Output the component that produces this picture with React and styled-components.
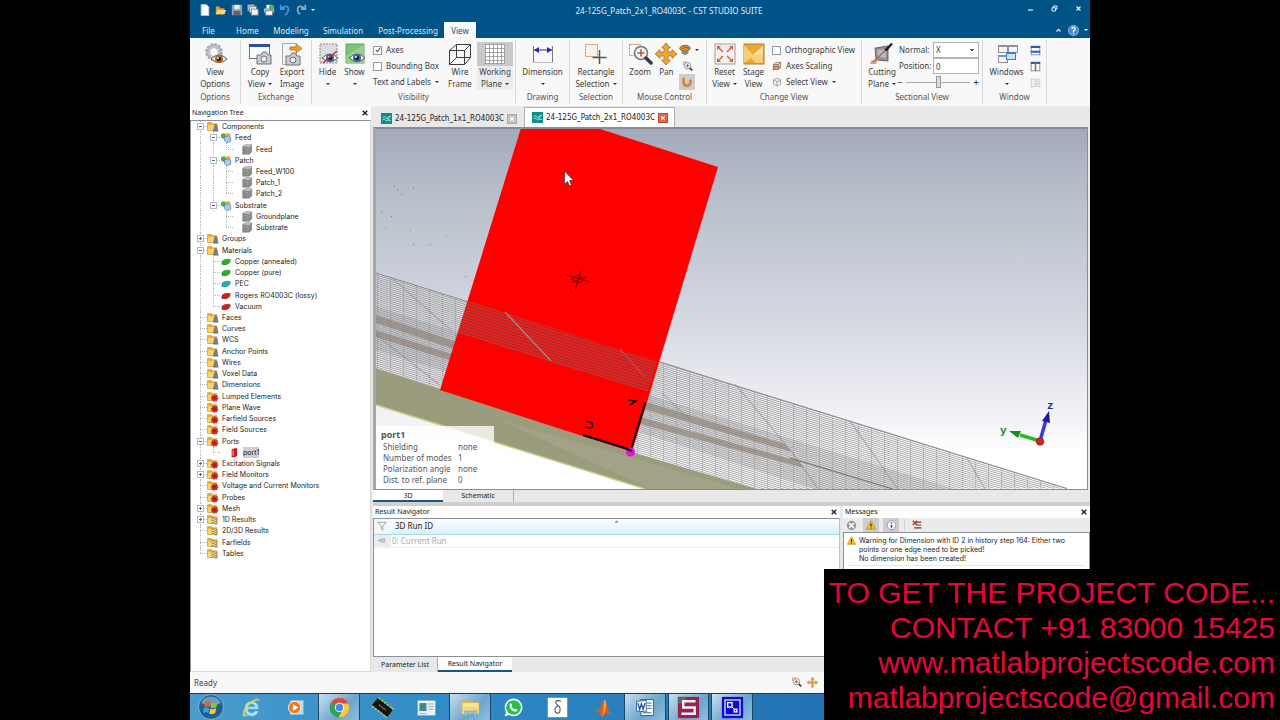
import React from "react";
import styled, { createGlobalStyle } from "styled-components";

const ui = '"Noto Sans", "Open Sans", sans-serif';
const small = 'Inter, "Noto Sans", sans-serif';
const tahoma = '"DejaVu Sans Condensed", "Noto Sans", sans-serif';

const Global = createGlobalStyle`
  * { box-sizing: border-box; }
  body { margin: 0; background: #000; }
  button, select, input { font: inherit; color: inherit; margin: 0; padding: 0; border: 0; background: none; border-radius: 0; }
  h1, h2, p, ul, dl, dd { margin: 0; padding: 0; font-size: inherit; font-weight: inherit; }
  ul { list-style: none; }
`;

const Stage = styled.div`
  position: relative;
  min-height: 100vh;
  background: #000;
`;
const Desktop = styled.div`
  display: flex;
  flex-direction: column;
  width: 125vh;
  max-width: 100%;
  height: 100vh;
  margin: 0 auto;
  background: #e8e8e8;
  color: #222;
  font: 8px/12px ${ui};
`;

/* ---------- title bar ---------- */
const TitleBar = styled.header`
  display: flex;
  align-items: center;
  height: 22px;
  flex: none;
  background: #005386;
  color: #e6eef5;
`;
const QuickBar = styled.div`
  display: flex;
  align-items: center;
  gap: 4px;
  width: 130px;
  padding: 0 0 2px 9px;
`;
const Title = styled.h1`
  flex: 1;
  text-align: center;
`;
const IconButton = styled.button`
  display: grid;
  place-items: center;
  width: ${(p) => p.$w || 12}px;
  height: ${(p) => p.$h || 16}px;
  background: ${(p) => (p.$on ? "#cdcdcd" : "none")};
`;
const WindowButton = styled.button`
  display: grid;
  place-items: center;
  width: 24px;
  height: 16px;
  margin-bottom: 6px;
`;
const Svg = styled.svg`
  display: block;
  flex: none;
  width: ${(p) => p.$w}px;
  height: ${(p) => p.$h || p.$w}px;
`;

/* ---------- ribbon ---------- */
const TabRow = styled.nav`
  display: flex;
  height: 16px;
  flex: none;
  background: #005386;
  color: #dfe9f2;
`;
const RibbonTab = styled.button`
  width: ${(p) => p.$w}px;
  padding-top: 2px;
  line-height: 14px;
  background: ${(p) => (p.$on ? "#f8f8f8" : "none")};
  color: ${(p) => (p.$on ? "#1b4f78" : "inherit")};
`;
const Spacer = styled.div`
  flex: 1;
`;
const Ribbon = styled.div`
  display: flex;
  height: 68px;
  flex: none;
  padding: 2px 0;
  background: #f8f8f8;
  color: #3c3c3c;
`;
const GroupBox = styled.section`
  display: flex;
  flex-direction: column;
  justify-content: space-between;
  width: ${(p) => p.$w}px;
  padding: 2px ${(p) => p.$pad || 0}px 1px;
  border-right: 1px solid #d8d8d8;
`;
const GroupRow = styled.div`
  display: flex;
  justify-content: ${(p) => p.$justify || "center"};
`;
const GroupTitle = styled.h2`
  text-align: center;
  color: #555;
`;
const BigButton = styled.button`
  display: flex;
  flex-direction: column;
  align-items: center;
  width: ${(p) => p.$w}px;
  height: 48px;
  white-space: nowrap;
  background: ${(p) => (p.$on ? "linear-gradient(#c9c9c9 24px, #ececec 24px)" : "none")};
`;
const Line = styled.span`
  display: flex;
  align-items: center;
  gap: 3px;
  height: 12px;
`;
const Caret = styled.i`
  border: 2px solid transparent;
  border-top-color: ${(p) => p.$c || "#333"};
  border-bottom: 0;
`;
const Stack = styled.div`
  display: flex;
  flex-direction: column;
  padding-left: ${(p) => p.$pl || 0}px;
  width: ${(p) => p.$w || 70}px;
`;
const Option = styled.label`
  display: flex;
  align-items: center;
  gap: 4px;
  height: 16px;
  white-space: nowrap;
`;
const OptionButton = styled.button`
  display: flex;
  align-items: center;
  gap: 4px;
  height: 16px;
  white-space: nowrap;
`;
const CheckCell = styled.span`
  display: grid;
  place-items: center;
  > * { grid-area: 1 / 1; }
  > svg { visibility: hidden; pointer-events: none; }
  > input:checked + svg { visibility: visible; }
`;
const CheckInput = styled.input`
  appearance: none;
  width: 9px;
  height: 9px;
  border: 1px solid #9a9a9a;
  background: #fff;
`;
const Field = styled.label`
  display: grid;
  grid-template-columns: 34px 46px;
  align-items: center;
  height: 16px;
`;
const fieldBox = `
  width: 100%;
  height: 16px;
  padding-left: 2px;
  border: 1px solid #b4b4b4;
  background: #fff;
  line-height: 12px;
  appearance: none;
`;
const TextBox = styled.input`${fieldBox}`;
const SelectBox = styled.select`
  ${fieldBox}
  background: linear-gradient(#555, #555) 36px 6px / 4px 1px no-repeat,
    linear-gradient(#555, #555) 37px 7px / 2px 1px no-repeat, #fff;
`;
const SliderRow = styled.div`
  display: flex;
  align-items: center;
  justify-content: space-between;
  height: 16px;
  margin-left: -2px;
`;
const Slider = styled.input`
  appearance: none;
  width: 64px;
  height: 12px;
  background: linear-gradient(#aaa, #aaa) 0 6px / 100% 1px no-repeat;
  &::-webkit-slider-thumb {
    appearance: none;
    width: 5px;
    height: 12px;
    border: 1px solid #999;
    background: #ddd;
  }
`;
const StepButton = styled.button`
  width: 6px;
  height: 12px;
  line-height: 10px;
  font-size: 10px;
`;

/* ---------- workspace ---------- */
const Body = styled.main`
  display: flex;
  flex: 1;
  min-height: 0;
`;
const NavDock = styled.aside`
  display: flex;
  flex-direction: column;
  width: 181px;
  flex: none;
  background: #fff;
`;
const DockHead = styled.div`
  display: flex;
  align-items: center;
  justify-content: space-between;
  height: ${(p) => p.$h || 12}px;
  flex: none;
  padding: 0 1px 0 2px;
  background: #fdfdfd;
  color: #222;
  font: 7px/12px ${ui};
`;
const TreeBox = styled.div`
  flex: 1;
  overflow: hidden;
  padding-left: 3px;
  border: 1px solid #8b9199;
  border-right-color: #d8d8d8;
  border-bottom-color: #d8d8d8;
`;
const TreeList = styled.ul`
  display: grid;
  grid-auto-rows: 1fr;
  height: 438px;
  font: 7px/11px ${small};
  color: #1c1c1c;
`;
const TreeRow = styled.li`
  display: flex;
  align-items: center;
`;
const dotsV = "repeating-linear-gradient(to bottom, #b4b4b4 0 1px, transparent 1px 2px)";
const dotsH = "repeating-linear-gradient(to right, #b4b4b4 0 1px, transparent 1px 2px)";
const guides = {
  "|": `${dotsV} 6px 0 / 1px 100% no-repeat`,
  t: `${dotsV} 6px 0 / 1px 100% no-repeat, ${dotsH} 6px 50% / 7px 1px no-repeat`,
  l: `${dotsV} 6px 0 / 1px 50% no-repeat, ${dotsH} 6px 50% / 7px 1px no-repeat`,
  " ": "none",
};
const Guide = styled.span`
  display: grid;
  place-items: center;
  width: 13px;
  height: 100%;
  background: ${(p) => guides[p.$kind]};
`;
const Toggle = styled.button`
  display: grid;
  place-items: center;
  width: 7px;
  height: 7px;
  border: 1px solid #b4bac4;
  background: ${(p) => (p.$open ? "" : "linear-gradient(#567, #567) 2px 1px / 1px 3px no-repeat,")}
    linear-gradient(#567, #567) 1px 2px / 3px 1px no-repeat, #fff;
`;
const TreeLabel = styled.span`
  display: flex;
  align-items: center;
  gap: 3px;
  padding-left: ${(p) => (p.$deep ? 8 : 0)}px;
  white-space: nowrap;
`;
const Marked = styled.span`
  background: ${(p) => (p.$on ? "#cfcfcf" : "none")};
`;
const Center = styled.div`
  display: flex;
  flex-direction: column;
  flex: 1;
  min-width: 0;
  padding-left: 2px;
`;
const DocTabs = styled.div`
  display: flex;
  align-items: flex-end;
  height: 21px;
  flex: none;
  background: #e8e8e8;
  font: 8px/12px ${tahoma};
`;
const DocTab = styled.div`
  display: flex;
  align-items: center;
  gap: 3px;
  width: 151px;
  height: ${(p) => (p.$on ? 20 : 18)}px;
  padding-left: 7px;
  border: solid ${(p) => (p.$on ? "#b0b0b0" : "transparent")};
  border-width: 1px 1px 0;
  background: ${(p) => (p.$on ? "#fff" : "none")};
`;
const TabClose = styled.button`
  display: grid;
  place-items: center;
  width: 10px;
  height: 10px;
  border: 1px solid ${(p) => (p.$hot ? "#c0492c" : "#aaa")};
  background: ${(p) => (p.$hot ? "#e06a4c" : "#c4c4c4")};
`;
const Viewport = styled.div`
  position: relative;
  flex: 1;
  min-height: 0;
  margin-right: 2px;
  border: solid #878c96;
  border-width: 2px 1px 1px 3px;
  border-left-color: #a6a8ac;
  background: linear-gradient(#a2a9b9 0%, #b4bbc8 14%, #bfc6ce 28%, #cccfda 42%, #d8dae2 55%, #e4e5ec 66%, #f0f0f5 78%, #ffffff 90%);
`;
const Scene = styled.svg`
  display: block;
  width: 100%;
  height: 100%;
`;
const InfoCard = styled.div`
  position: absolute;
  left: 0;
  bottom: 0;
  width: 118px;
  height: 63px;
  padding: 2px 0 0 5px;
  background: rgba(255, 255, 255, 0.78);
  color: #555;
`;
const InfoTitle = styled.h2`
  font-weight: 700;
  font-size: 9px;
  line-height: 13px;
`;
const InfoList = styled.dl`
  display: grid;
  grid-template-columns: 75px 1fr;
  padding-left: 2px;
  line-height: 11px;
`;
const ViewTabs = styled.div`
  display: flex;
  height: 16px;
  flex: none;
  border-bottom: 4px solid #cfcfcf;
  font: 7px/12px ${ui};
`;
const LowerTabs = styled.div`
  display: flex;
  height: 15px;
  flex: none;
  font: 7px/12px ${ui};
`;
const FlatTab = styled.button`
  width: ${(p) => p.$w}px;
  border-bottom: ${(p) => (p.$on ? "2px solid #1c567f" : "0")};
  border-right: ${(p) => (p.$on ? "0" : "1px solid #b0b0b0")};
  background: ${(p) => (p.$on ? "#fff" : "none")};
`;
const Lower = styled.div`
  display: flex;
  gap: 3px;
  height: 166px;
  flex: none;
`;
const Results = styled.section`
  display: flex;
  flex-direction: column;
  flex: 1;
`;
const ResultBox = styled.div`
  flex: 1;
  border: 1px solid #8b9199;
  border-right-color: #c0c0c0;
  background: #fff;
`;
const RunTable = styled.table`
  width: 100%;
  border-collapse: collapse;
  font: 8px/12px ${ui};
  text-align: left;
  th { padding: 0 0 0 4px; height: 15px; font-weight: 400; background: linear-gradient(#fdfeff, #d9f0fa); border-bottom: 1px solid #a6d9ec; }
  th:first-child { width: 17px; background: #f4f7f9; }
  td { padding: 0 0 0 1px; height: 12px; color: #a8a8a8; border-bottom: 1px solid #f2f2f2; }
  td:first-child, th:first-child { padding: 0 0 0 3px; }
  td:first-child { background: #ececec; }
`;
const HeadCell = styled.span`
  display: grid;
  grid-template-columns: 1fr 9px 1fr;
  align-items: start;
`;
const Messages = styled.section`
  display: flex;
  flex-direction: column;
  width: 247px;
  background: #fff;
`;
const MsgTools = styled.div`
  display: flex;
  align-items: center;
  gap: 4px;
  height: 14px;
  background: #ebebeb;
`;
const ToolDivider = styled.span`
  width: 2px;
  height: 12px;
  border-right: 1px solid #d0d0d0;
`;
const MsgBox = styled.div`
  flex: 1;
  padding: 3px 4px 0 3px;
  border: 1px solid #8b9199;
`;
const Msg = styled.div`
  display: grid;
  grid-template-columns: 12px 1fr;
  padding-bottom: 2px;
  margin-bottom: 3px;
  border-bottom: 1px solid #e6e6e6;
  font: 7px/9px ${small};
`;
const StatusBar = styled.footer`
  display: flex;
  align-items: center;
  gap: 4px;
  height: 21px;
  flex: none;
  padding: 0 272px 0 4px;
  background: #f8f8f8;
  color: #444;
`;
const TaskBar = styled.footer`
  display: flex;
  height: 27px;
  flex: none;
  border-top: 1px solid #173e5c;
  background: linear-gradient(90deg, #4a9ccb, #2f8ac4 30%, #2273b5 70%, #1f6cb0);
`;
const StartButton = styled.button`
  display: grid;
  place-items: center;
  width: 41px;
`;
const Tasks = styled.div`
  display: grid;
  grid-template-columns: repeat(12, 1fr);
  gap: 2px;
  width: 522px;
`;
const Task = styled.button`
  display: grid;
  place-items: center;
  border: solid ${(p) => (p.$on ? "#1b4766" : "transparent")};
  border-width: 0 1px;
  background: ${(p) => (p.$on ? "linear-gradient(135deg, #c9dfee, #6ba6ce 60%, #8fbedd)" : "none")};
`;
const Caption = styled.address`
  position: absolute;
  right: 0;
  bottom: 0;
  width: 456px;
  height: 151px;
  padding: 6px 5px 0 0;
  background: #000;
  color: #e6063f;
  font: normal 30px/35px "Liberation Sans", Arial, sans-serif;
  text-align: right;
  white-space: nowrap;
`;
const CaptionLink = styled.a`
  display: block;
  color: inherit;
  text-decoration: none;
`;

/* ---------- icons ---------- */
const Eye = ({ x, y, c = "#3b64a8" }) => (
  <g transform={`translate(${x} ${y})`}>
    <path d="M-8 0Q0-8 8 0Q0 7-8 0Z" fill="#f4f2ec" stroke="#5c5650" strokeWidth="1" />
    <circle r="4" fill={c} />
    <circle r="2" fill="#111" />
    <circle cx="-1" cy="-1" r="1" fill="#fff" />
  </g>
);
const Camera = ({ x, y }) => (
  <g transform={`translate(${x} ${y})`}>
    <path d="M0 3H4L6 0H9L11 3H14V12H0Z" fill="#c9ccd0" stroke="#6d7278" />
    <circle cx="7" cy="7" r="3" fill="#e9edf0" stroke="#6d7278" />
  </g>
);
const big = {
  viewOptions: (
    <>
      <circle cx="12" cy="10" r="7.5" fill="none" stroke="#a0a5aa" strokeWidth="2.5" strokeDasharray="2.6 1.330" />
      <circle cx="12" cy="10" r="5.500" fill="none" stroke="#bfc3c7" strokeWidth="3.500" />
      <circle cx="12" cy="10" r="7" fill="none" stroke="#9a9fa4" strokeWidth=".6" />
      <Eye x="17" y="17" c="#b06a28" />
    </>
  ),
  copyView: (
    <>
      <rect x="2.5" y="2.5" width="20" height="14" fill="#fdfdfd" stroke="#6c7a90" />
      <rect x="2" y="2" width="21" height="3" fill="#2b4da3" />
      <Camera x="10" y="10" />
    </>
  ),
  exportImage: (
    <>
      <path d="M3.500 1.500H17.500V22.500H3.500Z" fill="#f4f4f4" stroke="#a5a8ad" />
      <path d="M11 5H17V2L23 6.500L17 11V8H11Z" fill="#f29a2e" stroke="#a8651a" strokeWidth=".7" />
      <Camera x="7" y="11" />
    </>
  ),
  hide: (
    <>
      <rect x="5" y="2" width="17" height="19" fill="#dedede" stroke="#888" strokeDasharray="2 1" />
      <Eye x="15" y="16" />
      <path d="M8 21L22 9" stroke="#d4262a" strokeWidth="1.600" />
    </>
  ),
  show: (
    <>
      <rect x="4" y="2" width="18" height="19" fill="#7cc576" stroke="#63a860" />
      <path d="M4 14L22 3V21H4Z" fill="#a5dba0" opacity=".6" />
      <Eye x="15" y="16" />
    </>
  ),
  wire: <path d="M2.500 8.500H17.500V22.500H2.500ZM9.500 2.500H23.500V15.500H9.500ZM2.500 8.500L9.500 2.500M17.500 8.500L23.500 2.500M17.500 22.500L23.500 15.500M2.500 22.500L9.500 15.500" fill="none" stroke="#3d3d3d" />,
  grid: (
    <>
      <rect x="3" y="2" width="20" height="20" fill="#fff" />
      <path d="M3.500 2V22M7.500 2V22M11.500 2V22M15.500 2V22M19.500 2V22M22.500 2V22M3 2.500H23M3 6.500H23M3 10.500H23M3 14.500H23M3 18.500H23M3 21.500H23" stroke="#8f8f8f" strokeWidth=".8" />
    </>
  ),
  dimension: (
    <>
      <path d="M3.500 4V20M22.500 4V20" stroke="#777" />
      <path d="M3 20.500H23" stroke="#bbb" />
      <path d="M4 8H22" stroke="#2929b8" />
      <path d="M4 8L9 5V11ZM22 8L17 5V11Z" fill="#2929b8" />
    </>
  ),
  select: (
    <>
      <rect x="2.500" y="2.500" width="12" height="12" fill="#fbf3e8" stroke="#d08a45" strokeDasharray="2 1" />
      <path d="M16.500 8V22M9.500 15.500H23.500" stroke="#555" strokeWidth="1.500" />
    </>
  ),
  zoom: (
    <>
      <rect x="2.500" y="2.500" width="11" height="11" fill="none" stroke="#d08a45" strokeDasharray="2 1" />
      <circle cx="14" cy="11" r="6.500" fill="#eef4f8" stroke="#777" strokeWidth="1.500" />
      <path d="M14 7.500V14.500M10.500 11H17.500" stroke="#c05a2a" strokeWidth="1.600" />
      <path d="M19 16L24 21" stroke="#3a3a3a" strokeWidth="3.500" strokeLinecap="round" />
    </>
  ),
  pan: <path d="M13 1L17.500 6H15V10H19V7.500L24 12L19 16.500V14H15V18H17.500L13 23L8.500 18H11V14H7V16.500L2 12L7 7.500V10H11V6H8.500Z" fill="#f0a437" stroke="#b0721c" strokeWidth=".8" />,
  reset: (
    <>
      <rect x="3" y="2" width="20" height="20" fill="#f3f1ee" stroke="#9d9d9d" />
      <path d="M11 10L7 6M15 10L19 6M11 14L7 18M15 14L19 18" stroke="#cc5a3a" strokeWidth="1.300" />
      <path d="M5 4H9L5 8ZM21 4H17L21 8ZM5 20H9L5 16ZM21 20H17L21 16Z" fill="#cc5a3a" />
    </>
  ),
  stage: (
    <>
      <rect x="3" y="2" width="20" height="20" fill="#eda92f" stroke="#a9803c" />
      <path d="M3 3L12 13L22 4V21H15L10 16L3 21Z" fill="#f7cf74" />
      <path d="M12 13L22 4L21 12Z" fill="#fbe4a8" />
    </>
  ),
  cutting: (
    <>
      <path d="M6 6L19 4V19L7 18Z" fill="#8d9196" stroke="#555" strokeWidth=".8" />
      <path d="M8 8L17 7V16L9 15Z" fill="#b7bcc0" />
      <path d="M2 19L9 17L7 22H1Z" fill="#d9a183" />
      <path d="M4 20L19 6" stroke="#c2632e" strokeWidth="1.300" />
      <path d="M15 8L22 1L24 2L18 9Z" fill="#222" />
    </>
  ),
  windows: (
    <>
      {[[4, 3], [14, 3], [4, 13], [12, 10]].map(([x, y], i) => (
        <g key={i}>
          <rect x={x + 0.5} y={y + 0.5} width="9" height="7" fill={i === 3 ? "#cfe2f8" : "#f4f4f4"} stroke={i === 3 ? "#3f7fc8" : "#8d9298"} />
          <rect x={x} y={y} width="10" height="2" fill={i === 3 ? "#3f7fc8" : "#8d9298"} />
        </g>
      ))}
    </>
  ),
};
const Big = ({ name }) => (
  <Svg $w={26} $h={24} viewBox="0 0 26 24" aria-hidden="true">{big[name]}</Svg>
);

const tiny = {
  page: <path d="M2.500 .5H8.500L11.500 3.500V13.500H2.500Z" fill="#fff" stroke="#b9c4cd" />,
  open: (
    <>
      <path d="M1 3H5L6 5H11V12H1Z" fill="#d9a132" />
      <path d="M3 7H13L11 12H1Z" fill="#ffd873" />
    </>
  ),
  save: (
    <>
      <rect x="1" y="1" width="12" height="12" fill="#9aa2ab" />
      <rect x="4" y="1" width="6" height="5" fill="#e8ecef" />
      <rect x="3" y="8" width="8" height="5" fill="#5d656e" />
    </>
  ),
  copies: (
    <>
      <rect x="1" y="1" width="8" height="7" fill="#c9d1d8" stroke="#7a868f" />
      <rect x="3" y="3" width="8" height="7" fill="#dde3e8" stroke="#7a868f" />
      <rect x="5" y="6" width="8" height="7" fill="#f1f4f6" stroke="#7a868f" />
    </>
  ),
  print: (
    <>
      <rect x="4" y="1" width="7" height="5" fill="#fff" />
      <rect x="1" y="5" width="12" height="5" rx="1" fill="#a9b3ba" />
      <rect x="3" y="8" width="8" height="5" fill="#fff" stroke="#75808a" />
      <circle cx="10" cy="4" r="3" fill="#4fb34c" />
    </>
  ),
  undo: <path d="M3 5Q10 0 11 6Q11 10 7 13M2 1V6H7" fill="none" stroke="#4c8fdc" strokeWidth="2" />,
  redo: <path d="M11 5Q4 0 3 6Q3 10 6 12M12 1V6H7" fill="none" stroke="#90a8bc" strokeWidth="2" />,
  rotate: (
    <>
      <ellipse cx="7" cy="5" rx="6" ry="3.500" fill="#d98f3a" stroke="#77522a" />
      <path d="M4 5Q7 3 12 5" fill="none" stroke="#77522a" />
      <path d="M3 8H11V11L7 13L3 11Z" fill="#888" />
    </>
  ),
  zoomMini: (
    <>
      <path d="M2 5V1H6" fill="none" stroke="#d08a45" />
      <circle cx="7" cy="6" r="4" fill="#f3f6f8" stroke="#777" />
      <path d="M7 4V8M5 6H9" stroke="#c4552a" strokeWidth="1.400" />
      <path d="M10 9L13 12" stroke="#333" strokeWidth="2" />
    </>
  ),
  orbit: <path d="M3 2V7Q3 11.500 7 11.500T11 7V4" fill="none" stroke="#d48635" strokeWidth="3" />,
  scaling: (
    <>
      <path d="M2 5H9V12H2ZM5 2H12V9H9M2 5L5 2M9 5L12 2M9 12L12 9M4 5V12M7 5V12M2 8H9" fill="#f3ddc4" stroke="#8a5b37" />
      <path d="M1 13L5 9" stroke="#d9772d" strokeWidth="2" />
    </>
  ),
  box: <path d="M2 4L7 1.500L12 4V10L7 13L2 10ZM2 4L7 6.500L12 4M7 6.500V13" fill="#eee" stroke="#888" />,
  splitH: (
    <>
      <rect x="1.500" y="1.500" width="11" height="11" fill="#fff" stroke="#5f7fae" />
      <path d="M1 2.500H13M1 8.500H13" stroke="#2d5c9c" strokeWidth="2.500" />
    </>
  ),
  splitV: (
    <>
      <rect x="1.500" y="1.500" width="11" height="11" fill="#fff" stroke="#6b7784" />
      <path d="M1 2.500H13" stroke="#2d5c9c" strokeWidth="2.500" />
      <path d="M7 1V13" stroke="#6b7784" strokeWidth="2" />
    </>
  ),
  splitG: <path d="M1.500 2.500H6.500V12.500H1.500ZM8.500 2.500H12.500V6.500H8.500ZM8.500 8.500H12.500V12.500H8.500Z" fill="#f2f2f2" stroke="#c0c0c0" />,
  cst: (
    <>
      <rect width="14" height="14" fill="#0d8e87" />
      <path d="M2 6Q4 3 6 6T9 5M2 9Q4 6 6 9T9 8M12.500 4.500H10V9.500H12.500" fill="none" stroke="#d6f3ee" />
    </>
  ),
  tick: <path d="M3 7L6 10L11 3" fill="none" stroke="#444" strokeWidth="1.800" />,
  x: <path d="M3 3L11 11M11 3L3 11" stroke="currentColor" strokeWidth="2.400" />,
  min: <path d="M2 10H12" stroke="currentColor" strokeWidth="2.400" />,
  restore: <path d="M5 5V2H12V8H9M2 5.500H9V12H2Z" fill="none" stroke="currentColor" strokeWidth="2" />,
  up: <path d="M3 9L7 5L11 9" fill="none" stroke="currentColor" strokeWidth="2.500" />,
  warn: (
    <>
      <path d="M7 1L13.500 13H.5Z" fill="#f6c024" stroke="#c08a10" />
      <path d="M7 5V9M7 10.500V12" stroke="#222" strokeWidth="1.600" />
    </>
  ),
  err: (
    <>
      <circle cx="7" cy="7" r="6" fill="#999" />
      <path d="M4 4L10 10M10 4L4 10" stroke="#fff" strokeWidth="2" />
    </>
  ),
  info: (
    <>
      <circle cx="7" cy="6.500" r="5.500" fill="#fff" stroke="#7d8ba6" />
      <path d="M7 3V4.500M7 6V10" stroke="#23479b" strokeWidth="2" />
      <path d="M5 12L7 14L8 12Z" fill="#7d8ba6" />
    </>
  ),
  clear: (
    <>
      <path d="M5 3H13M5 7H13M3 11H13" stroke="#444" strokeWidth="1.600" />
      <path d="M1 1L7 7M7 1L1 7" stroke="#cc2a2a" strokeWidth="1.800" />
    </>
  ),
  filter: <path d="M1 2H13L8 7V13L6 11V7Z" fill="#f4f4f4" stroke="#888" />,
  pin: <path d="M1 7H5M5 5V9H9L12 10V4L9 5H5" fill="#ccc" stroke="#999" />,
  sortUp: <path d="M3 5L7 1L11 5Z" fill="#5d7f92" />,
  panMini: <path d="M7 0L9 3H8V6H11V4.500L14 7L11 9.500V8H8V11H9L7 14L5 11H6V8H3V9.500L0 7L3 4.500V6H6V3H5Z" fill="#e3a13d" stroke="#b47520" strokeWidth=".4" />,
};
const Tiny = ({ name, s = 10 }) => (
  <Svg $w={s} viewBox="0 0 14 14" aria-hidden="true">{tiny[name]}</Svg>
);
const Check = (props) => (
  <CheckCell>
    <CheckInput type="checkbox" {...props} />
    <Tiny name="tick" s={8} />
  </CheckCell>
);

const badge = {
  cone: <path d="M9 6Q10.500 3 12 6L13.500 13H7.500Z" fill="#7d828a" stroke="#4e535a" strokeWidth=".6" />,
  gear: (
    <>
      <circle cx="9" cy="9" r="3.500" fill="#c8281c" stroke="#c8281c" strokeWidth="2.500" strokeDasharray="1.600 1" />
      <circle cx="9" cy="9" r="1.300" fill="#8e1a12" />
    </>
  ),
  plot: <path d="M5 6Q7 3 9 6T13 5.500M5 9Q7 6 9 9T13 8.500M5 12Q7 9 9 12T13 11.500" fill="none" stroke="#7b7f88" strokeWidth="1.200" />,
};
const NodeIcon = ({ kind }) => {
  const mats = { green: "#2cae2c", cyan: "#20adb8", red: "#cf2028" };
  let art;
  if (badge[kind])
    art = (
      <>
        <path d="M0 2H5L6 3.500H12V12H0Z" fill="#e9ae34" stroke="#b37f1c" strokeWidth=".6" />
        <path d="M0.500 5H11V11.500H.5Z" fill="#fad36c" />
        {badge[kind]}
      </>
    );
  else if (mats[kind])
    art = <path d="M1.500 9Q1 6 5 4.500Q10 3 12.500 4.500V7Q12 9.500 8 11Q3 12 1.500 10.500Z" fill={mats[kind]} stroke="#00000055" strokeWidth=".6" />;
  else if (kind === "parts")
    art = (
      <>
        <circle cx="4" cy="5" r="3.500" fill="#4db04a" />
        <circle cx="9.500" cy="4.500" r="3.300" fill="#edb23a" />
        <path d="M5 6L10 5L13 7V12L8 13.500L5 11Z" fill="#a9cbf0" stroke="#3d6fb0" strokeWidth=".8" />
      </>
    );
  else if (kind === "solid")
    art = (
      <>
        <path d="M1.500 3L5 1H13V10L10 13H1.500Z" fill="#8a8a8a" stroke="#707070" strokeWidth=".6" />
        <path d="M1.500 3L5 1H13L10 4Z" fill="#bdbdbd" />
        <path d="M4 6H8V11" fill="none" stroke="#a5a5a5" />
      </>
    );
  else
    art = (
      <>
        <path d="M4 3L8 1.500H11V11L8 13H4Z" fill="#cf1820" />
        <path d="M5 4H7V11H5Z" fill="#f5767a" />
      </>
    );
  return <Svg $w={12} $h={11} viewBox="0 0 14 14" aria-hidden="true">{art}</Svg>;
};

/* guide codes: | line, t branch, l last branch, - open node, + closed node */
const nodes = [
  ["-", "cone", "Components"], ["|-", "parts", "Feed"], ["||l", "solid", "Feed"],
  ["|-", "parts", "Patch"], ["||t", "solid", "Feed_W100"], ["||t", "solid", "Patch_1"], ["||l", "solid", "Patch_2"],
  ["|-", "parts", "Substrate"], ["| t", "solid", "Groundplane"], ["| l", "solid", "Substrate"],
  ["+", "cone", "Groups"], ["-", "cone", "Materials"],
  ["|t", "green", "Copper (annealed)"], ["|t", "green", "Copper (pure)"], ["|t", "cyan", "PEC"],
  ["|t", "red", "Rogers RO4003C (lossy)"], ["|l", "red", "Vacuum"],
  ["t", "cone", "Faces"], ["t", "cone", "Curves"], ["t", "cone", "WCS"], ["t", "cone", "Anchor Points"],
  ["t", "cone", "Wires"], ["t", "cone", "Voxel Data"], ["t", "cone", "Dimensions"],
  ["t", "gear", "Lumped Elements"], ["t", "gear", "Plane Wave"], ["t", "gear", "Farfield Sources"], ["t", "gear", "Field Sources"],
  ["-", "gear", "Ports"], ["|l", "port", "port1"],
  ["+", "gear", "Excitation Signals"], ["+", "gear", "Field Monitors"], ["t", "gear", "Voltage and Current Monitors"],
  ["t", "gear", "Probes"], ["+", "gear", "Mesh"],
  ["+", "plot", "1D Results"], ["t", "plot", "2D/3D Results"], ["t", "plot", "Farfields"], ["l", "plot", "Tables"],
];

const Tree = () => (
  <TreeList>
    {nodes.map(([code, icon, text], i) => (
      <TreeRow key={i}>
        {[...code].map((c, j) =>
          c === "-" || c === "+" ? (
            <Guide key={j} $kind="t"><Toggle $open={c === "-"} aria-label={`Toggle ${text}`} /></Guide>
          ) : (
            <Guide key={j} $kind={c} />
          )
        )}
        <TreeLabel $deep={icon === "solid" || icon === "port"}>
          <NodeIcon kind={icon} />
          <Marked $on={icon === "port"}>{text}</Marked>
        </TreeLabel>
      </TreeRow>
    ))}
  </TreeList>
);

const Group = ({ w, title, pad, justify, children }) => (
  <GroupBox $w={w} $pad={pad}>
    <GroupRow $justify={justify}>{children}</GroupRow>
    <GroupTitle>{title}</GroupTitle>
  </GroupBox>
);
const Tool = ({ w, icon, a, b, drop, on }) => (
  <BigButton $w={w} $on={on}>
    <Big name={icon} />
    <Line>{a}</Line>
    <Line>{b}{drop && <Caret />}</Line>
  </BigButton>
);

const specks = [[394, 186], [397, 190], [401, 194], [413, 188], [381, 211], [391, 216], [385, 228], [410, 230], [446, 236], [413, 244], [430, 244], [465, 276]];

const SceneArt = () => (
  <Scene viewBox="376 129 711 360" preserveAspectRatio="xMinYMin slice" role="img" aria-label="3D model of the patch antenna">
    <defs>
      <pattern id="mesh" width="13" height="2" patternUnits="userSpaceOnUse" patternTransform="skewY(17.2)">
        <rect width="13" height="2" fill="#ffffff" opacity=".3" />
        <path d="M0 .5H13" stroke="#777" strokeWidth=".6" />
        <path d="M.5 0V2" stroke="#888" strokeWidth=".4" />
      </pattern>
      <pattern id="meshRed" width="4" height="3" patternUnits="userSpaceOnUse" patternTransform="skewY(17.2)">
        <path d="M0 1H4" stroke="#8a5a56" strokeWidth="1.200" />
      </pattern>
    </defs>
    <path d="M376 368L440 389L632 452L757 489H645L376 405Z" fill="#9b9c7e" />
    <path d="M376 405L645 489" stroke="#c9cf8c" strokeWidth="1.500" />
    <path d="M500 420L640 460L740 489H650" fill="#a5a78c" opacity=".6" />
    <path d="M376 273L740 387L1067 488.500L757 489L632 452L376 368Z" fill="url(#mesh)" />
    <path d="M376 306L645 394L740 423L955 489H815L645 434L376 350Z" fill="#8e8e92" opacity=".28" />
    <path d="M376 315L460 343V351L376 323ZM376 330L455 355V362L376 337ZM640 400L785 444L791 452L640 408ZM640 417L798 461L804 468L640 424Z" fill="#8d8177" opacity=".65" />
    <path d="M376 273L740 387L1067 488.500" fill="none" stroke="#777" strokeWidth=".8" />
    <path d="M393 279L452 331M735 384L792 452L818 489M850 421L898 489M967 458L985 489M662 393L690 420M376 335L440 385" fill="none" stroke="#808088" strokeWidth=".8" opacity=".8" />
    <path d="M790 458L893 489" stroke="#777" strokeWidth="1.300" />
    {specks.map(([x, y]) => <rect key={`${x}-${y}`} x={x} y={y} width="1" height="1" fill="#7d838e" />)}
    <path d="M521 128H597L718 167L632 452L440 390Z" fill="#ff0000" />
    <path d="M467.500 301L657 361L647.500 392L457.500 333Z" fill="url(#meshRed)" />
    <path d="M505 312L551 361" stroke="#9d8580" strokeWidth="1.500" />
    <path d="M620 349L645 377" stroke="#a07068" strokeWidth=".8" />
    <path d="M566 275L590 282M582 268L575 290M572 278L577 284L584 280L578 275ZM572 282L586 277" fill="none" stroke="#5c0000" strokeWidth=".8" />
    <path d="M583 435L631 450L645 403" fill="none" stroke="#000" strokeWidth="2" />
    <path d="M586 421L592 423Q594 428 590 428L585 427" fill="none" stroke="#200" strokeWidth="1.600" />
    <path d="M628 400L636 401L630 405" fill="none" stroke="#200" strokeWidth="1.600" />
    <circle cx="630.500" cy="452" r="4.500" fill="#e413d2" />
    <path d="M627 449L632 451" stroke="#000" strokeWidth="2" />
    <path d="M1040 441L1020 435" stroke="#2fb52f" strokeWidth="3.500" />
    <path d="M1009 431L1021 431L1018 438Z" fill="#17901a" />
    <path d="M1040 441L1046 420" stroke="#3a3ad6" strokeWidth="3.500" />
    <path d="M1049 411L1050 423L1042 421Z" fill="#1d1d9c" />
    <circle cx="1040" cy="441.500" r="3.800" fill="#d81e1e" stroke="#8c1212" strokeWidth=".6" />
    <text x="1000" y="434" fontFamily="Liberation Mono, monospace" fontWeight="700" fontSize="11" fill="#1a8a1a">y</text>
    <text x="1047" y="409" fontFamily="Liberation Mono, monospace" fontWeight="700" fontSize="11" fill="#2424a8">z</text>
    <path d="M564.500 171V184L567.500 181.500L569.500 186L571.500 185L569.500 180.500H573.500Z" fill="#fff" stroke="#222" strokeWidth=".6" />
  </Scene>
);

const taskArt = {
  IE: (
    <>
      <path d="M21 15H9Q9 19 13 19Q16 19 17 17H21Q19 23 13 23Q5 22 5 14Q6 6 13 6Q21 6 21 15ZM9 12H17Q16 9 13 9T9 12" fill="#a9e2f8" stroke="#3f9cc9" strokeWidth=".5" />
      <path d="M3 22Q3 12 14 5Q22 1 22 6Q20 3 13 8Q5 14 5 21Q8 22 11 21Q3 25 3 22Z" fill="#f3cf46" />
    </>
  ),
  Media: (
    <>
      <rect x="7" y="5" width="15" height="16" fill="#b7dbef" />
      <circle cx="12" cy="13" r="7" fill="#ee7a1e" stroke="#fff" />
      <path d="M10 9L16 13L10 17Z" fill="#fff" />
    </>
  ),
  Chrome: (
    <>
      <circle cx="13" cy="13" r="11" fill="#dd4a3c" />
      <path d="M13 13L3.500 7.500A11 11 0 0 0 12 24L17 15Z" fill="#2aa557" />
      <path d="M13 8.500H23A11 11 0 0 1 12 24L17 15Z" fill="#fbcb39" />
      <circle cx="13" cy="13" r="5.300" fill="#fff" />
      <circle cx="13" cy="13" r="4.200" fill="#4787ef" />
    </>
  ),
  Chip: (
    <g transform="rotate(38 13 13)">
      <path d="M4 6V20M8 6V20M12 6V20M16 6V20M20 6V20M23 6V20" stroke="#c9d24c" strokeWidth="1.800" />
      <rect x="2" y="8" width="22" height="10" fill="#141410" />
      <path d="M8 13H18" stroke="#888" strokeWidth="1.500" strokeDasharray="2 1" />
    </g>
  ),
  News: (
    <>
      <rect x="3" y="5" width="20" height="17" fill="#e9f2f6" stroke="#8aa" strokeWidth=".7" />
      <rect x="5" y="8" width="8" height="9" fill="#3f8a86" />
      <path d="M15 9H21M15 12H21M15 15H21M5 20H13" stroke="#8ca2ab" />
    </>
  ),
  Explorer: (
    <>
      <path d="M3 5H11L12 7H23V21H3Z" fill="#e3b44a" />
      <rect x="4" y="8" width="18" height="12" fill="#fbe59a" />
      <path d="M4 14Q13 10 22 14V19H4Z" fill="#f6d574" />
      <path d="M6 23V17H20V23H17V20H9V23Z" fill="#8cc8ea" stroke="#4d93bd" strokeWidth=".5" />
    </>
  ),
  WhatsApp: (
    <>
      <path d="M3 23L4.500 18A10 10 0 1 1 8 21.500Z" fill="#fff" />
      <circle cx="13" cy="13" r="8.300" fill="#29bd4b" />
      <path d="M9 9Q10 7.500 11 9L11.500 11L10.800 12Q12 14.500 14.500 15.300L15.500 14.500L17.500 15.500Q17.500 17.500 15 17.800Q9 16.500 8.500 11Z" fill="#fff" />
    </>
  ),
  Delta: (
    <>
      <rect x="2" y="2" width="22" height="22" fill="#fff" />
      <path d="M17 6Q12 4 11 7Q11 9 14 11Q17 14 15.500 18Q13 21 10.500 18Q9 13 13.500 11" fill="none" stroke="#555" strokeWidth="1.200" />
    </>
  ),
  Matlab: (
    <>
      <path d="M2 15L9 12L12 15L8 19Z" fill="#3f86ad" />
      <path d="M8 19Q12 15 14 8Q16 1 18 8Q20 16 24 21Q18 17 14 24Q12 18 8 19Z" fill="#df5c1c" />
      <path d="M16 4Q18 4 18.500 10Q18 17 14 24Q16 12 16 4Z" fill="#f5a53a" />
    </>
  ),
  Word: (
    <>
      <rect x="9" y="4" width="14" height="18" fill="#fff" stroke="#2b5797" />
      <path d="M16 8H21M16 11H21M11 19H21M16 14H21" stroke="#2b5797" />
      <path d="M4 6L15 5V18L4 17Z" fill="#fff" stroke="#2b5797" />
      <path d="M5.500 8L7.500 15L9.500 9L11.500 15L13.500 8" fill="none" stroke="#2b5797" strokeWidth="1.600" />
    </>
  ),
  Suite: (
    <>
      <rect x="1" y="1" width="24" height="24" fill="#96224e" />
      <path d="M1 1H10V9H1Z" fill="#5a6a5e" />
      <path d="M21 6H7V13H20V20H5" fill="none" stroke="#f6eef2" strokeWidth="2.800" />
    </>
  ),
  Pixel: (
    <>
      <rect x="1" y="1" width="24" height="24" fill="#0b0bd2" />
      <rect x="4.500" y="4.500" width="17" height="17" fill="none" stroke="#fff" strokeWidth="1.300" />
      <rect x="7.500" y="7.500" width="5" height="5" fill="none" stroke="#fff" strokeWidth="1.500" />
      <rect x="15" y="15" width="3" height="3" fill="none" stroke="#fff" strokeWidth="1.500" />
      <path d="M12 12L15 15" stroke="#fff" />
    </>
  ),
};
const tasks = [["IE"], ["Media"], ["Chrome", 1], ["Chip"], ["News"], ["Explorer", 1], ["WhatsApp"], ["Delta"], ["Matlab"], ["Word", 1], ["Suite", 1], ["Pixel", 1]];

export default function App() {
  return (
    <Stage>
      <Global />
      <Desktop>
        <TitleBar>
          <QuickBar>
            {["page", "open", "save", "copies", "print", "undo", "redo"].map((n) => (
              <IconButton key={n} aria-label={n}><Tiny name={n} s={12} /></IconButton>
            ))}
            <Caret $c="#fff" />
          </QuickBar>
          <Title>24-125G_Patch_2x1_RO4003C - CST STUDIO SUITE</Title>
          <WindowButton aria-label="Minimize"><Tiny name="min" s={7} /></WindowButton>
          <WindowButton aria-label="Restore"><Tiny name="restore" s={7} /></WindowButton>
          <WindowButton aria-label="Close"><Tiny name="x" s={7} /></WindowButton>
        </TitleBar>
        <TabRow>
          <RibbonTab $w={37}>File</RibbonTab>
          <RibbonTab $w={41}>Home</RibbonTab>
          <RibbonTab $w={46}>Modeling</RibbonTab>
          <RibbonTab $w={58}>Simulation</RibbonTab>
          <RibbonTab $w={72}>Post-Processing</RibbonTab>
          <RibbonTab $w={32} $on>View</RibbonTab>
          <Spacer />
          <IconButton aria-label="Collapse ribbon"><Tiny name="up" s={7} /></IconButton>
          <IconButton $w={18} aria-label="Help">
            <Svg $w={11} viewBox="0 0 14 14">
              <circle cx="7" cy="7" r="6.500" fill="#4f86d6" stroke="#a8c6ee" />
              <path d="M5 5Q5 3 7 3T9 5Q9 6.500 7 7.500V9M7 10V11.500" fill="none" stroke="#fff" strokeWidth="1.600" />
            </Svg>
          </IconButton>
          <IconButton $w={8} aria-label="Help menu"><Caret $c="#fff" /></IconButton>
        </TabRow>
        <Ribbon>
          <Group w={51} title="Options">
            <Tool w={50} icon="viewOptions" a="View" b="Options" />
          </Group>
          <Group w={71} title="Exchange">
            <Tool w={32} icon="copyView" a="Copy" b="View" drop />
            <Tool w={32} icon="exportImage" a="Export" b="Image" />
          </Group>
          <Group w={204} title="Visibility" justify="flex-start" pad={2}>
            <Tool w={27} icon="hide" a="Hide" drop />
            <Tool w={27} icon="show" a="Show" drop />
            <Stack $w={75} $pl={5}>
              <Option><Check defaultChecked />Axes</Option>
              <Option><Check />Bounding Box</Option>
              <OptionButton>Text and Labels<Caret /></OptionButton>
            </Stack>
            <Tool w={34} icon="wire" a="Wire" b="Frame" />
            <Tool w={36} icon="grid" a="Working" b="Plane" drop on />
          </Group>
          <Group w={54} title="Drawing">
            <Tool w={48} icon="dimension" a="Dimension" drop />
          </Group>
          <Group w={53} title="Selection">
            <Tool w={48} icon="select" a="Rectangle" b="Selection" drop />
          </Group>
          <Group w={84} title="Mouse Control" justify="flex-start" pad={4}>
            <Tool w={28} icon="zoom" a="Zoom" />
            <Tool w={27} icon="pan" a="Pan" />
            <Stack $w={24}>
              <OptionButton aria-label="Rotate"><Tiny name="rotate" s={12} /><Caret /></OptionButton>
              <IconButton $w={16} aria-label="Dynamic zoom"><Tiny name="zoomMini" s={11} /></IconButton>
              <IconButton $w={16} $on aria-label="Rotate in plane"><Tiny name="orbit" s={12} /></IconButton>
            </Stack>
          </Group>
          <Group w={155} title="Change View" justify="flex-start" pad={3}>
            <Tool w={29} icon="reset" a="Reset" b="View" drop />
            <Tool w={29} icon="stage" a="Stage" b="View" />
            <Stack $w={88} $pl={4}>
              <Option><Check />Orthographic View</Option>
              <OptionButton><Tiny name="scaling" />Axes Scaling</OptionButton>
              <OptionButton><Tiny name="box" />Select View<Caret /></OptionButton>
            </Stack>
          </Group>
          <Group w={121} title="Sectional View" justify="flex-start" pad={3}>
            <Tool w={34} icon="cutting" a="Cutting" b="Plane" drop />
            <Stack $w={80}>
              <Field>Normal:<SelectBox defaultValue="X"><option>X</option><option>Y</option><option>Z</option></SelectBox></Field>
              <Field>Position:<TextBox defaultValue="0" /></Field>
              <SliderRow>
                <StepButton aria-label="Decrease">−</StepButton>
                <Slider type="range" aria-label="Plane position" />
                <StepButton aria-label="Increase">+</StepButton>
              </SliderRow>
            </Stack>
          </Group>
          <Group w={64} title="Window" justify="flex-start" pad={3}>
            <Tool w={42} icon="windows" a="Windows" drop />
            <Stack $w={16}>
              <IconButton $w={16} aria-label="Split horizontally"><Tiny name="splitH" s={11} /></IconButton>
              <IconButton $w={16} aria-label="Split vertically"><Tiny name="splitV" s={11} /></IconButton>
              <IconButton $w={16} aria-label="Arrange"><Tiny name="splitG" s={11} /></IconButton>
            </Stack>
          </Group>
        </Ribbon>
        <Body>
          <NavDock>
            <DockHead $h={14}>Navigation Tree<IconButton $w={10} $h={10} aria-label="Close tree"><Tiny name="x" s={8} /></IconButton></DockHead>
            <TreeBox><Tree /></TreeBox>
          </NavDock>
          <Center>
            <DocTabs>
              <DocTab><Tiny name="cst" s={11} />24-125G_Patch_1x1_RO4003C<TabClose aria-label="Close tab"><Svg $w={6} viewBox="0 0 14 14" color="#fff">{tiny.x}</Svg></TabClose></DocTab>
              <DocTab $on><Tiny name="cst" s={11} />24-125G_Patch_2x1_RO4003C<TabClose $hot aria-label="Close tab"><Svg $w={6} viewBox="0 0 14 14" color="#fff">{tiny.x}</Svg></TabClose></DocTab>
            </DocTabs>
            <Viewport>
              <SceneArt />
              <InfoCard>
                <InfoTitle>port1</InfoTitle>
                <InfoList>
                  <dt>Shielding</dt><dd>none</dd>
                  <dt>Number of modes</dt><dd>1</dd>
                  <dt>Polarization angle</dt><dd>none</dd>
                  <dt>Dist. to ref. plane</dt><dd>0</dd>
                </InfoList>
              </InfoCard>
            </Viewport>
            <ViewTabs>
              <FlatTab $w={70} $on>3D</FlatTab>
              <FlatTab $w={71}>Schematic</FlatTab>
            </ViewTabs>
            <Lower>
              <Results>
                <DockHead>Result Navigator<IconButton $w={10} $h={10} aria-label="Close results"><Tiny name="x" s={8} /></IconButton></DockHead>
                <ResultBox>
                  <RunTable>
                    <thead>
                      <tr>
                        <th><Tiny name="filter" /></th>
                        <th><HeadCell>3D Run ID<Tiny name="sortUp" s={7} /></HeadCell></th>
                      </tr>
                    </thead>
                    <tbody>
                      <tr><td><Tiny name="pin" s={9} /></td><td>0: Current Run</td></tr>
                    </tbody>
                  </RunTable>
                </ResultBox>
                <LowerTabs>
                  <FlatTab $w={65}>Parameter List</FlatTab>
                  <FlatTab $w={74} $on>Result Navigator</FlatTab>
                </LowerTabs>
              </Results>
              <Messages>
                <DockHead>Messages<IconButton $w={10} $h={10} aria-label="Close messages"><Tiny name="x" s={8} /></IconButton></DockHead>
                <MsgTools>
                  <IconButton $w={16} $h={14} aria-label="Errors"><Tiny name="err" s={11} /></IconButton>
                  <IconButton $w={16} $h={14} $on aria-label="Warnings"><Tiny name="warn" /></IconButton>
                  <IconButton $w={16} $h={14} $on aria-label="Information"><Tiny name="info" s={11} /></IconButton>
                  <ToolDivider />
                  <IconButton $w={16} $h={14} aria-label="Clear"><Tiny name="clear" /></IconButton>
                </MsgTools>
                <MsgBox>
                  <Msg>
                    <Tiny name="warn" s={9} />
                    <p>Warning for Dimension with ID 2 in history step 164: Either two<br />points or one edge need to be picked!<br />No dimension has been created!</p>
                  </Msg>
                  <Tiny name="info" s={9} />
                </MsgBox>
              </Messages>
            </Lower>
          </Center>
        </Body>
        <StatusBar>
          Ready
          <Spacer />
          <IconButton aria-label="Zoom"><Tiny name="zoomMini" s={11} /></IconButton>
          <IconButton aria-label="Pan"><Tiny name="panMini" s={11} /></IconButton>
        </StatusBar>
        <TaskBar>
          <StartButton aria-label="Start">
            <Svg $w={26} viewBox="0 0 26 26">
              <circle cx="13" cy="13" r="12.500" fill="#1f5f93" stroke="#7fb4d8" />
              <path d="M3 9A11 11 0 0 1 23 9Q13 14 3 9Z" fill="#a9d0e8" opacity=".55" />
              <path d="M7 8Q10 6 12.500 8L11.500 13Q9 11.500 6 13Z" fill="#e8622a" />
              <path d="M13.500 8.500Q16 10 19.500 8L18.500 13Q15.500 15 12.500 13.500Z" fill="#8cc63f" />
              <path d="M5.800 14Q9 12.500 11.300 14L10.300 19Q8 17.500 5 19Z" fill="#3f9be0" />
              <path d="M12.300 14.500Q15 16 18.300 14L17.300 19Q14 21 11.300 19.500Z" fill="#fbc92f" />
            </Svg>
          </StartButton>
          <Tasks>
            {tasks.map(([n, on]) => (
              <Task key={n} $on={on} aria-label={n}><Svg $w={23} viewBox="0 0 26 26">{taskArt[n]}</Svg></Task>
            ))}
          </Tasks>
        </TaskBar>
      </Desktop>
      <Caption>
        <p>TO GET THE PROJECT CODE...</p>
        <p>CONTACT +91 83000 15425</p>
        <CaptionLink href="#site">www.matlabprojectscode.com</CaptionLink>
        <CaptionLink href="#mail">matlabprojectscode@gmail.com</CaptionLink>
      </Caption>
    </Stage>
  );
}
